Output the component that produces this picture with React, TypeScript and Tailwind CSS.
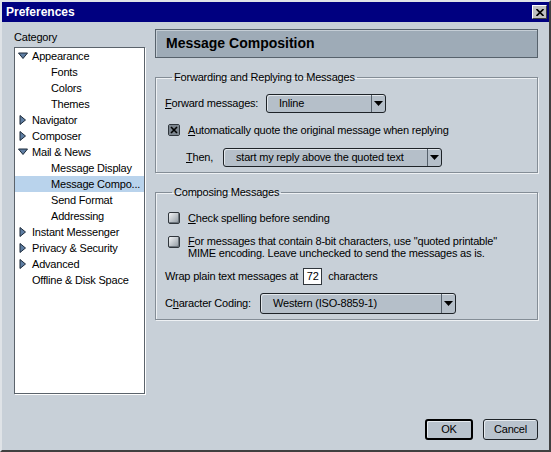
import type { ReactNode } from 'react'

// Mozilla-style "Preferences" dialog — Message Composition pane.

const FONT = { fontFamily: '"Liberation Sans", Arial, sans-serif' }

type Node = { label: string; level: 0 | 1; open?: boolean; closed?: boolean; selected?: boolean }

const TREE: Node[] = [
  { label: 'Appearance', level: 0, open: true },
  { label: 'Fonts', level: 1 },
  { label: 'Colors', level: 1 },
  { label: 'Themes', level: 1 },
  { label: 'Navigator', level: 0, closed: true },
  { label: 'Composer', level: 0, closed: true },
  { label: 'Mail & News', level: 0, open: true },
  { label: 'Message Display', level: 1 },
  { label: 'Message Compo...', level: 1, selected: true },
  { label: 'Send Format', level: 1 },
  { label: 'Addressing', level: 1 },
  { label: 'Instant Messenger', level: 0, closed: true },
  { label: 'Privacy & Security', level: 0, closed: true },
  { label: 'Advanced', level: 0, closed: true },
  { label: 'Offline & Disk Space', level: 0 },
]

function Twisty({ open }: { open: boolean }) {
  return (
    <svg width="10" height="10" viewBox="0 0 10 10" className="shrink-0">
      {open ? (
        <polygon points="0.5,2 9.5,2 5,7.5" fill="#5f7ea3" stroke="#1c2a3a" strokeWidth="1" />
      ) : (
        <polygon points="2,0.5 2,9.5 7.5,5" fill="#5f7ea3" stroke="#1c2a3a" strokeWidth="1" />
      )}
    </svg>
  )
}

function Checkbox({ checked }: { checked?: boolean }) {
  return (
    <span className="flex h-[12px] w-[12px] shrink-0 items-center justify-center rounded-[2px] border border-[#30363c] bg-gradient-to-br from-[#f4f6f8] to-[#8e979f] shadow-[inset_-1px_-1px_0_#6c747c]">
      {checked && (
        <svg width="10" height="10" viewBox="0 0 10 10">
          <rect x="0" y="0" width="10" height="10" fill="#7c858e" />
          <path d="M2 2 L8 8 M8 2 L2 8" stroke="#000" strokeWidth="1.6" />
        </svg>
      )}
    </span>
  )
}

function Select({ value, className }: { value: string; className: string }) {
  return (
    <div
      className={`flex items-stretch rounded-[3px] border border-[#1e2328] bg-[#b5bfc9] shadow-[inset_1px_1px_0_#e2e7ec] ${className}`}
    >
      <span className="flex flex-1 items-center pl-[12px]">{value}</span>
      <span className="flex w-[14px] items-center justify-center border-l border-[#55606b]">
        <svg width="9" height="5" viewBox="0 0 9 5">
          <polygon points="0,0 9,0 4.5,5" fill="#000" />
        </svg>
      </span>
    </div>
  )
}

function U({ children }: { children: ReactNode }) {
  return <span className="underline underline-offset-[1px]">{children}</span>
}

function Group({ title, children, className }: { title: string; children: ReactNode; className: string }) {
  return (
    <fieldset
      className={`border border-[#848d96] shadow-[inset_1px_1px_0_#eef1f4,1px_1px_0_#eef1f4] ${className}`}
    >
      <legend className="ml-[7px] px-[2px] leading-[13px]">{title}</legend>
      {children}
    </fieldset>
  )
}

function Button({ children, def }: { children: ReactNode; def?: boolean }) {
  return (
    <button
      className={`flex h-[21px] items-center justify-center rounded-[3px] bg-[#b9c3cd] shadow-[inset_1px_1px_0_#e6ebf0] ${
        def ? 'w-[48px] border-2 border-black' : 'w-[55px] border border-[#1e2328]'
      }`}
    >
      {children}
    </button>
  )
}

export default function App() {
  return (
    <div
      style={FONT}
      className="flex h-[452px] w-[551px] flex-col border-2 border-t-[#dfe3e7] border-l-[#dfe3e7] border-r-[#404040] border-b-[#404040] bg-[#c8d0d8] text-[11px] tracking-[-0.2px] text-black"
    >
      {/* title bar */}
      <div className="flex h-[20px] items-center justify-between bg-[#000080] pl-[4px] pr-[2px]">
        <span className="text-[12px] font-bold tracking-normal text-white">Preferences</span>
        <span className="flex h-[14px] w-[15px] items-center justify-center border border-t-white border-l-white border-r-[#404040] border-b-[#404040] bg-[#c0c0c0]">
          <svg width="8" height="7" viewBox="0 0 8 7">
            <path d="M0.5 0 L7.5 7 M7.5 0 L0.5 7" stroke="#000" strokeWidth="1.6" />
          </svg>
        </span>
      </div>

      <div className="flex flex-1 gap-[10px] pl-[12px] pr-[11px] pt-[7px]">
        {/* category tree */}
        <div className="flex w-[131px] flex-col">
          <div className="h-[18px] leading-[16px]">Category</div>
          <div className="h-[347px] border border-[#5b636b] bg-white shadow-[1px_1px_0_#fff]">
            {TREE.map(n => (
              <div
                key={n.label}
                className={`flex h-[16px] items-center whitespace-nowrap ${
                  n.selected ? 'bg-[#b9d3ec]' : ''
                } ${n.level === 1 ? 'pl-[36px]' : n.open || n.closed ? 'pl-[3px]' : 'pl-[17px]'}`}
              >
                {n.level === 0 && (n.open || n.closed) && (
                  <span className="mr-[4px] flex">
                    <Twisty open={!!n.open} />
                  </span>
                )}
                {n.label}
              </div>
            ))}
          </div>
        </div>

        {/* right pane */}
        <div className="flex w-[383px] flex-col">
          <div className="flex h-[29px] items-center border border-[#57626c] bg-[#9eabb7] pl-[10px] text-[14px] font-bold tracking-normal shadow-[inset_1px_1px_0_#c5ced6]">
            Message Composition
          </div>

          <Group title="Forwarding and Replying to Messages" className="mt-[13px] h-[102px] pl-[9px]">
            <div className="mt-[10px] flex h-[19px] items-center">
              <span className="w-[101px]">
                <U>F</U>orward messages:
              </span>
              <Select value="Inline" className="h-[19px] w-[120px]" />
            </div>
            <div className="mt-[10px] flex h-[14px] items-center pl-[3px]">
              <Checkbox checked />
              <span className="ml-[8px]">
                <U>A</U>utomatically quote the original message when replying
              </span>
            </div>
            <div className="mt-[11px] flex h-[19px] items-center pl-[21px]">
              <span className="w-[37px]">
                <U>T</U>hen,
              </span>
              <Select value="start my reply above the quoted text" className="h-[19px] w-[219px]" />
            </div>
          </Group>

          <Group title="Composing Messages" className="mt-[13px] h-[134px] pl-[9px]">
            <div className="mt-[12px] flex h-[14px] items-center pl-[3px]">
              <Checkbox />
              <span className="ml-[8px]">
                <U>C</U>heck spelling before sending
              </span>
            </div>
            <div className="mt-[10px] flex items-start pl-[3px]">
              <span className="mt-[1px]">
                <Checkbox />
              </span>
              <span className="ml-[8px] leading-[12px]">
                <U>F</U>or messages that contain 8-bit characters, use "quoted printable"
                <br />
                MIME encoding. Leave unchecked to send the messages as is.
              </span>
            </div>
            <div className="mt-[9px] flex h-[17px] items-center">
              <span>Wrap plain text messages at</span>
              <span className="ml-[5px] flex h-[17px] w-[19px] items-center justify-center border border-[#30363c] bg-white">
                72
              </span>
              <span className="ml-[6px]">characters</span>
            </div>
            <div className="mt-[8px] flex h-[21px] items-center">
              <span className="w-[95px]">
                C<U>h</U>aracter Coding:
              </span>
              <Select value="Western (ISO-8859-1)" className="h-[21px] w-[196px]" />
            </div>
          </Group>
        </div>
      </div>

      {/* buttons */}
      <div className="flex h-[31px] items-start justify-end gap-[10px] pr-[11px]">
        <Button def>OK</Button>
        <Button>Cancel</Button>
      </div>
    </div>
  )
}
